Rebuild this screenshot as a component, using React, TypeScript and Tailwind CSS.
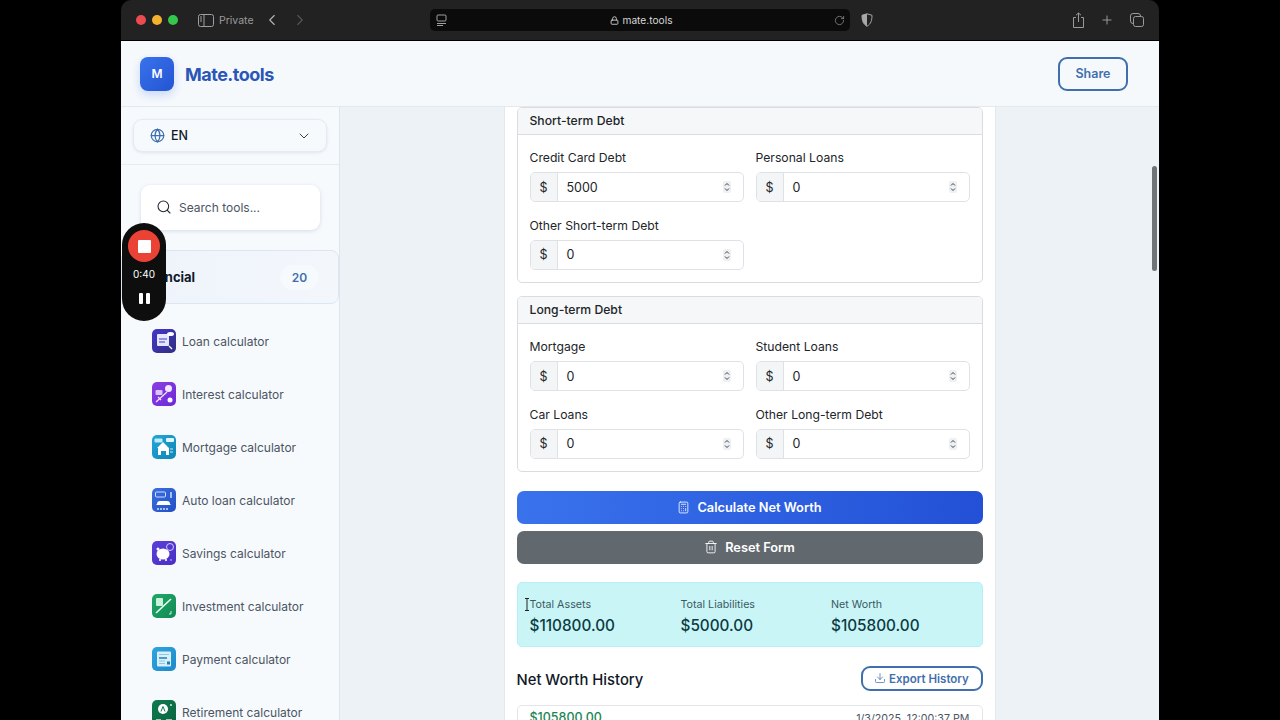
import { Calculator, ChevronDown, ChevronLeft, ChevronRight, Download, Globe, Lock, Plus, RotateCw, Search, Trash2 } from 'lucide-react';
import type { ReactNode } from 'react';

function Spinner() {
  return (
    <svg width="8" height="12" viewBox="0 0 8 12" fill="none" stroke="#374151" strokeWidth="1">
      <rect x="0" y="0" width="8" height="12" rx="2" fill="#eef0f2" stroke="none" />
      <path d="M2 4.500 4 2.500l2 2M2 7.500l2 2 2-2" />
    </svg>
  );
}

function Field({ label, value }: { label: string; value: string }) {
  return (
    <div className="flex flex-col">
      <div className="mb-[5px] pt-[2px] text-[12.2px] leading-[18px] text-[#212529]">{label}</div>
      <div className="flex h-[30px] items-center overflow-hidden rounded-[5px] border border-[#dee2e6] bg-white">
        <div className="flex h-full w-[27px] items-center justify-center border-r border-[#dee2e6] bg-[#f3f5f7] pt-[2px] text-[12.5px] text-[#212529]">$</div>
        <div className="flex-1 pl-[9px] pt-[2px] text-[12.5px] text-[#212529]">{value}</div>
        <div className="mr-[12px] flex h-[14px] w-[8px] items-center justify-center">
          <Spinner />
        </div>
      </div>
    </div>
  );
}

function Section({ title, children }: { title: string; children: ReactNode }) {
  return (
    <div className="shrink-0 overflow-hidden rounded-[5px] border border-[#d9dde1]">
      <div className="flex h-[27px] items-center border-b border-[#d9dde1] bg-[#f6f7f8] px-3 text-[12.2px] font-medium text-[#212529]">{title}</div>
      <div className="grid grid-cols-2 gap-x-3 gap-y-[12.5px] px-3 pb-3 pt-[12px]">{children}</div>
    </div>
  );
}

function ToolIcon({ from, to, children }: { from: string; to: string; children: ReactNode }) {
  return (
    <div className="h-6 w-6 shrink-0 overflow-hidden rounded-[5px]" style={{ background: `linear-gradient(135deg, ${from}, ${to})` }}>
      <svg width="24" height="24" viewBox="0 0 24 24">{children}</svg>
    </div>
  );
}

const tools: { name: string; from: string; to: string; art: ReactNode }[] = [
  {
    name: 'Loan calculator', from: '#4338ca', to: '#312e81',
    art: (
      <>
        <rect x="5" y="5" width="12" height="12" rx="1" fill="#e5e7ff" />
        <path d="M7 10h8M7 13h6" stroke="#4338ca" strokeWidth="1.2" />
        <ellipse cx="18.5" cy="5" rx="3.5" ry="2" fill="#fff" />
        <path d="m17 17 3 3" stroke="#fff" strokeWidth="1.2" />
      </>
    ),
  },
  {
    name: 'Interest calculator', from: '#8b3fe0', to: '#6d28d9',
    art: (
      <>
        <rect x="3.5" y="8" width="7" height="5" rx="1" fill="#d9c5fa" />
        <circle cx="16.5" cy="6.5" r="3.5" fill="#f3e8ff" />
        <path d="m4 20 11-10M6 15l3 3" stroke="#f3e8ff" strokeWidth="1.2" fill="none" />
        <circle cx="18" cy="18" r="2.5" fill="#fff" />
      </>
    ),
  },
  {
    name: 'Mortgage calculator', from: '#22a7d8', to: '#0e86b4',
    art: (
      <>
        <path d="M5 13 11 7l6 6v7h-3v-4H9v4H6v-7z" fill="#fff" />
        <rect x="2.5" y="3.5" width="8" height="4" rx="1" fill="#bfeaf9" />
        <rect x="14" y="3" width="8" height="4" rx="1" fill="#e0f6fd" />
        <path d="M18 14h3M18 17h3" stroke="#bfeaf9" strokeWidth="1.2" />
      </>
    ),
  },
  {
    name: 'Auto loan calculator', from: '#3b6fe0', to: '#2250c4',
    art: (
      <>
        <rect x="3.5" y="4" width="10" height="5" rx="1" fill="none" stroke="#cfe0ff" strokeWidth="1" />
        <path d="M5 16c0-2 1-3 3-3h7c2 0 3 1 3 3l1 1H4z" fill="#fff" />
        <path d="M19 4v6" stroke="#fff" strokeWidth="1.2" />
        <path d="M5 21h11" stroke="#cfe0ff" strokeWidth="1.6" strokeDasharray="2 1" />
      </>
    ),
  },
  {
    name: 'Savings calculator', from: '#5b3fd9', to: '#4a2fc4',
    art: (
      <>
        <ellipse cx="11" cy="13" rx="6.5" ry="5.5" fill="#fff" />
        <circle cx="6" cy="8" r="1.5" fill="#fff" />
        <path d="M8 18v2M14 18v2" stroke="#fff" strokeWidth="1.6" />
        <circle cx="18" cy="6" r="3.5" fill="none" stroke="#d6ccff" strokeWidth="1" />
        <circle cx="19" cy="19" r="0.8" fill="#d6ccff" />
      </>
    ),
  },
  {
    name: 'Investment calculator', from: '#22a868', to: '#0f8a55',
    art: (
      <>
        <rect x="4" y="4" width="7" height="8" rx="1" fill="#c9f2dc" />
        <path d="M4 19 19 5" stroke="#eafff3" strokeWidth="1.6" />
        <path d="M19 17v3h-2" stroke="#c9f2dc" strokeWidth="1" fill="none" />
      </>
    ),
  },
  {
    name: 'Payment calculator', from: '#2fa4e0', to: '#1d8ac9',
    art: (
      <>
        <rect x="5" y="4.5" width="14" height="15" rx="1" fill="#d9f0fb" />
        <path d="M7 7.5h10" stroke="#8cc9e8" strokeWidth="1" />
        <path d="M7 11h8" stroke="#1d7fbb" strokeWidth="1.4" />
        <path d="M7 14h6M7 16.5h6" stroke="#8cc9e8" strokeWidth="1.2" />
        <rect x="15" y="14.5" width="3" height="3" fill="#1d7fbb" />
      </>
    ),
  },
  {
    name: 'Retirement calculator', from: '#0f7a4f', to: '#0a6640',
    art: (
      <>
        <circle cx="11" cy="9" r="5" fill="#fff" />
        <path d="M11 6.5 9 11.5M11 6.5l2 5" stroke="#0f7a4f" strokeWidth="1" />
        <path d="M4 20h5M14 20h6" stroke="#c9f2dc" strokeWidth="1.5" />
        <circle cx="19" cy="5" r="1" fill="#c9f2dc" />
      </>
    ),
  },
];

function BrowserBar() {
  return (
    <div className="flex h-[41px] shrink-0 items-center rounded-t-[10px] border-b border-black bg-[#222222] pl-[15px] pr-[14px]">
      <div className="flex gap-[6px]">
        <span className="h-[10px] w-[10px] rounded-full bg-[#ec4c51]" />
        <span className="h-[10px] w-[10px] rounded-full bg-[#f3b32e]" />
        <span className="h-[10px] w-[10px] rounded-full bg-[#34c84a]" />
      </div>
      <svg className="ml-[20px]" width="16" height="13" viewBox="0 0 16 13" fill="none" stroke="#a0a0a0" strokeWidth="1">
        <rect x="0.5" y="0.5" width="15" height="12" rx="2" />
        <path d="M6 .5v12M2 3h2M2 5h2M2 7h2" />
      </svg>
      <span className="ml-[5px] w-[36px] pt-[2px] text-[10.5px] text-[#9b9b9b]">Private</span>
      <ChevronLeft className="ml-[8px] h-[18px] w-[18px] text-[#b5b5b5]" strokeWidth={1.5} />
      <ChevronRight className="ml-[10px] h-[18px] w-[18px] text-[#555555]" strokeWidth={1.5} />
      <div className="ml-[121px] flex h-[22px] w-[420px] items-center rounded-[5px] bg-[#0b0b0b] pl-[6px] pr-[5px]">
        <svg width="11" height="13" viewBox="0 0 11 13" fill="none" stroke="#a0a0a0" strokeWidth="1">
          <rect x="1" y="1" width="9" height="6" rx="1" />
          <path d="M1 9.5h9M1 11.5h6" />
        </svg>
        <div className="flex flex-1 items-center justify-center gap-[3px] pl-[2px] pt-[1px] text-[10.2px] text-[#d8d8d8]">
          <Lock className="h-[9px] w-[9px] text-[#c8c8c8]" strokeWidth={2.5} />
          mate.tools
        </div>
        <RotateCw className="h-[11px] w-[11px] text-[#9b9b9b]" strokeWidth={1.5} />
      </div>
      <svg className="ml-[11px]" width="12" height="14" viewBox="0 0 12 14">
        <path d="M6 .8 11 2.3c0 5-1 8.6-5 11-4-2.4-5-6-5-11z" fill="none" stroke="#a8a8a8" strokeWidth="1" />
        <path d="M6 .8 1 2.3c0 5 1 8.6 5 11z" fill="#a8a8a8" />
      </svg>
      <svg className="ml-[199px]" width="13" height="16" viewBox="0 0 13 16" fill="none" stroke="#9b9b9b" strokeWidth="1">
        <path d="M4 5.5H1.5v10h10v-10H9M6.5 10V1M4 3.2 6.5 1 9 3.2" />
      </svg>
      <Plus className="ml-[15px] h-[14px] w-[14px] text-[#a8a8a8]" strokeWidth={1.5} />
      <svg className="ml-[16px]" width="14" height="14" viewBox="0 0 14 14" fill="none" stroke="#9b9b9b" strokeWidth="1">
        <rect x="3.5" y="3.5" width="10" height="10" rx="2" />
        <path d="M3.5 10.5H3a2.5 2.5 0 0 1-2.5-2.5V3A2.5 2.5 0 0 1 3 .5h5A2.5 2.5 0 0 1 10.500 3v.5" />
      </svg>
    </div>
  );
}

function Header() {
  return (
    <header className="flex h-[66px] shrink-0 items-center justify-between border-b border-[#e5e9ee] bg-[#f6f9fc] pl-[19px] pr-[31px]">
      <div className="flex items-center gap-[11px]">
        <div className="flex h-[34px] w-[34px] items-center justify-center rounded-[8px] bg-gradient-to-br from-[#3a72ec] to-[#2454d3] text-[12px] font-semibold text-white shadow-[0_4px_10px_rgba(37,99,235,0.22)]">M</div>
        <span className="pt-[2px] text-[18px] font-bold tracking-[-0.5px] text-[#2a56b8]">Mate.tools</span>
      </div>
      <button className="flex h-[34px] w-[70px] items-center justify-center rounded-[9px] border-2 border-[#3f70ad] pt-[2px] text-[12.5px] font-semibold text-[#3f70ad]">Share</button>
    </header>
  );
}

function Sidebar() {
  return (
    <aside className="flex w-[219px] shrink-0 flex-col overflow-hidden border-r border-[#dfe5ec] bg-[#f7fafd]">
      <div className="h-[58px] shrink-0 border-b border-[#e8ecf1] px-3 pt-3">
        <div className="flex h-[33px] items-center rounded-[9px] border border-[#e5ebf3] bg-[#f7fafd] pl-[16px] pr-[14px] shadow-[0_1px_3px_rgba(60,90,140,0.12)]">
          <Globe className="h-[15px] w-[15px] text-[#3f70ad]" strokeWidth={2} />
          <span className="ml-[6px] flex-1 pt-[2px] text-[12.5px] font-medium text-[#111827]">EN</span>
          <ChevronDown className="h-4 w-4 text-[#374151]" strokeWidth={1.5} />
        </div>
      </div>
      <div className="shrink-0 pl-5 pr-[19px] pt-5">
        <div className="flex h-[45px] items-center rounded-[9px] bg-white pl-[15px] shadow-[0_1px_4px_rgba(60,90,140,0.18)]">
          <Search className="mb-[2px] h-[16px] w-[16px] text-[#1f2937]" strokeWidth={1.6} />
          <span className="ml-[7px] text-[12px] text-[#4b5563]">Search tools...</span>
        </div>
      </div>
      <div className="mt-[20px] flex h-[54px] shrink-0 items-center justify-between rounded-[8px] border border-[#dbe6f3] bg-gradient-to-r from-[#eef3fb] to-[#f3f7fc] pl-[16px] pr-[19px]">
        <span className="pt-[2px] text-[13px] font-bold text-[#111827]">Financial</span>
        <span className="flex h-[25px] w-[39px] items-center justify-center rounded-full bg-[#f7fafd] pt-[2px] text-[12px] font-semibold text-[#3f70ad]">20</span>
      </div>
      <div className="flex flex-col gap-[29px] pl-[31px] pt-[25px]">
        {tools.map((t) => (
          <div key={t.name} className="flex items-center gap-[6px]">
            <ToolIcon from={t.from} to={t.to}>{t.art}</ToolIcon>
            <span className="whitespace-nowrap pt-[2px] text-[12px] text-[#4b5563]">{t.name}</span>
          </div>
        ))}
      </div>
    </aside>
  );
}

function Results() {
  const cols = [
    { label: 'Total Assets', value: '$110800.00', w: 'w-[151px]' },
    { label: 'Total Liabilities', value: '$5000.00', w: 'w-[150.5px]' },
    { label: 'Net Worth', value: '$105800.00', w: 'w-[140px]' },
  ];
  return (
    <div className="mt-[18px] flex h-[65px] shrink-0 items-center rounded-[5px] border border-[#b6effb] bg-[#c9f5f7] pl-[12px] pt-[5px]">
      {cols.map((c) => (
        <div key={c.label} className={c.w}>
          <div className="text-[10.7px] leading-[16px] text-[#3a5a62]">{c.label}</div>
          <div className="mt-[2px] text-[15.3px] font-medium leading-[22px] text-[#0b3a42]">{c.value}</div>
        </div>
      ))}
    </div>
  );
}

function Main() {
  return (
    <main className="flex min-w-0 flex-1 justify-center overflow-hidden bg-[#edf2f7]">
      <div className="flex w-[492px] shrink-0 flex-col border-x border-[#e4e8ec] bg-white px-3">
        <Section title="Short-term Debt">
          <Field label="Credit Card Debt" value="5000" />
          <Field label="Personal Loans" value="0" />
          <Field label="Other Short-term Debt" value="0" />
        </Section>
        <div className="h-[13.5px] shrink-0" />
        <Section title="Long-term Debt">
          <Field label="Mortgage" value="0" />
          <Field label="Student Loans" value="0" />
          <Field label="Car Loans" value="0" />
          <Field label="Other Long-term Debt" value="0" />
        </Section>
        <button className="mt-[19px] flex h-[33px] shrink-0 items-center justify-center gap-[7px] rounded-[7px] bg-gradient-to-r from-[#3a72ec] to-[#2350d6] text-[12.8px] font-semibold text-white">
          <Calculator className="h-[13px] w-[13px]" strokeWidth={1.5} />
          <span className="pt-[2px]">Calculate Net Worth</span>
        </button>
        <button className="mt-[7px] flex h-[33px] shrink-0 items-center justify-center gap-[7px] rounded-[7px] bg-[#62696e] text-[12.8px] font-semibold text-white">
          <Trash2 className="h-[14px] w-[14px]" strokeWidth={1.5} />
          <span className="pt-[2px]">Reset Form</span>
        </button>
        <Results />
        <div className="mt-[19px] flex h-[25px] shrink-0 items-center justify-between">
          <span className="pt-[4px] text-[14.8px] font-medium text-[#111827]">Net Worth History</span>
          <button className="flex h-[25px] w-[122px] items-center justify-center gap-[3px] rounded-[9px] border-2 border-[#3f70ad] text-[11.5px] font-semibold text-[#3f70ad]">
            <Download className="h-[12px] w-[12px]" strokeWidth={1.5} />
            <span className="pt-[3px]">Export History</span>
          </button>
        </div>
        <div className="mt-[14px] flex h-[40px] shrink-0 justify-between rounded-t-[5px] border border-[#e3e6e9] px-3 pt-[3px]">
          <span className="text-[12.5px] font-medium text-[#198754]">$105800.00</span>
          <span className="pt-[2px] text-[10.7px] text-[#4b5563]">1/3/2025, 12:00:37 PM</span>
        </div>
      </div>
    </main>
  );
}

export default function App() {
  return (
    <div className="relative h-[720px] w-[1280px] overflow-hidden bg-black font-['Inter',sans-serif]">
      <div className="mx-[121px] flex h-[720px] w-[1038px] flex-col overflow-hidden">
        <BrowserBar />
        <Header />
        <div className="flex min-h-0 flex-1">
          <Sidebar />
          <Main />
        </div>
      </div>

      {/* scrollbar */}
      <div className="absolute left-[1152px] top-[166px] h-[105px] w-[5px] rounded-full bg-[#6f7478]" />

      {/* text cursor */}
      <svg className="absolute left-[524px] top-[598px]" width="6" height="13" viewBox="0 0 6 13" fill="none" stroke="#222" strokeWidth="1">
        <path d="M1 .5h4M3 .5v12M1 12.5h4" />
      </svg>

      {/* screen recorder pill */}
      <div className="absolute left-[122px] top-[223px] flex h-[98px] w-[44px] flex-col items-center rounded-full bg-[#0e0e0e] pt-[7px]">
        <div className="flex h-[32px] w-[32px] items-center justify-center rounded-full bg-[#ea4335]">
          <div className="h-[13px] w-[13px] rounded-[1px] bg-white" />
        </div>
        <span className="mt-[5px] text-[10px] leading-[14px] text-white">0:40</span>
        <div className="mt-[12px] flex gap-[3px]">
          <span className="h-[11px] w-[4px] rounded-[1px] bg-white" />
          <span className="h-[11px] w-[4px] rounded-[1px] bg-white" />
        </div>
      </div>
    </div>
  );
}
